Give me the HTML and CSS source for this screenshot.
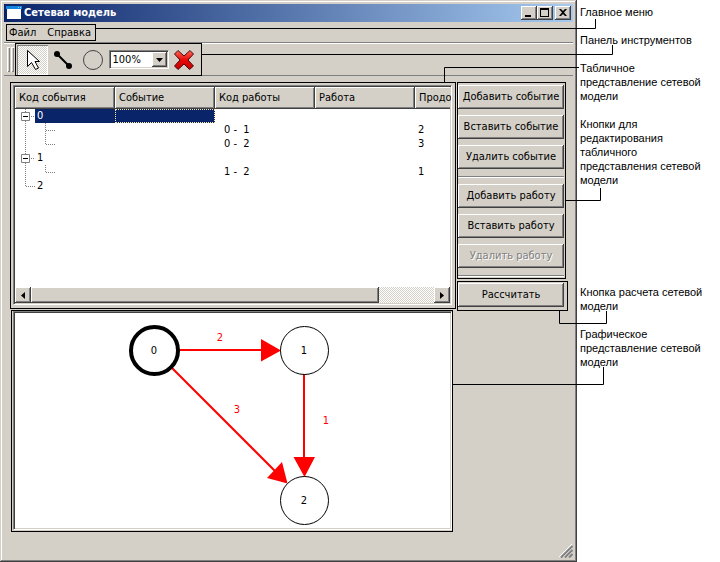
FILE: index.html
```html
<!DOCTYPE html>
<html lang="ru">
<head>
<meta charset="utf-8">
<title>Сетевая модель</title>
<link rel="stylesheet" href="styles.css">
</head>
<body>
<div class="page">
  <section class="window">
    <header class="titlebar">
      <svg class="app-icon" width="16" height="14" viewBox="0 0 16 14" aria-hidden="true"><path fill="#fff" d="M1 0h14v13H1z"/><path fill="#1486e0" d="M0 0h16v3H0z"/><path fill="#8fd0ff" d="M12 1h1v1h-1zM14 1h1v1h-1z"/></svg>
      <h1>Сетевая модель</h1>
      <button class="caption raised" type="button" aria-label="Свернуть"><svg width="12" height="10" viewBox="0 0 12 10"><path d="M2 7h6v2H2z"/></svg></button>
      <button class="caption raised" type="button" aria-label="Развернуть"><svg width="12" height="10" viewBox="0 0 12 10"><path fill-rule="evenodd" d="M1 0h9v9H1zM2 2v6h7V2z"/></svg></button>
      <button class="caption close raised" type="button" aria-label="Закрыть"><svg width="12" height="10" viewBox="0 0 12 10"><path d="M2 1h2l2 2 2-2h2L7 4.500l3 3.500H8L6 6 4 8H2l3-3.500z"/></svg></button>
    </header>
    <nav class="menubar">
      <div class="menu"><button type="button">Файл</button><button type="button">Справка</button></div>
    </nav>
    <div class="toolbar">
      <span class="grip"></span><span class="grip"></span>
      <div class="tools">
        <button class="tool pressed" type="button" aria-label="Выбор"><svg width="28" height="28" viewBox="0 0 28 28"><path fill="#fff" stroke="#000" d="M9.500 4.500v16l4-4 4 7 3-1.500-3.500-6.500h4.500z"/></svg></button>
        <button class="tool" type="button" aria-label="Работа"><svg width="28" height="28" viewBox="0 0 28 28"><path stroke="#000" stroke-width="2" d="M8 8l12 12"/><circle cx="8" cy="8" r="3"/><circle cx="20" cy="20" r="3"/></svg></button>
        <button class="tool" type="button" aria-label="Событие"><svg width="28" height="28" viewBox="0 0 28 28"><circle cx="14" cy="14" r="9.500" fill="none" stroke="#444"/></svg></button>
        <div class="zoom">
          <select aria-label="Масштаб"><option>100%</option></select>
          <span class="drop raised"><svg width="7" height="4" viewBox="0 0 7 4"><path d="M0 0h7L3.500 4z"/></svg></span>
        </div>
        <button class="tool" type="button" aria-label="Удалить"><svg width="24" height="24" viewBox="0 0 24 24"><defs><linearGradient id="red" x2="0" y2="1"><stop stop-color="#ff6a5a"/><stop offset=".5" stop-color="#e80808"/><stop offset="1" stop-color="#c40000"/></linearGradient></defs><path fill="url(#red)" stroke="#4a0808" d="M6 2.500L12 8l6-5.500L21.500 6 16 12l5.500 6-4 3.500L12 16l-6 5.500L2.500 18 8 12 2.500 6z"/></svg></button>
      </div>
    </div>
    <main class="content">
      <div class="views">
        <section class="grid-outline">
          <div class="sunken grid-view">
            <table>
              <thead><tr><th>Код события</th><th>Событие</th><th>Код работы</th><th>Работа</th><th>Продо</th></tr></thead>
              <tbody>
                <tr><td class="tree"><div><svg width="20" height="14" viewBox="0 0 20 14"><path class="dots" d="M10.500 0v14M16 7.500h4"/><path class="box" d="M6.500 3.500h8v8h-8z"/><path class="sign" d="M8 7.500h5"/></svg><span class="label selected">0</span></div></td><td class="focus"></td><td></td><td></td><td></td></tr>
                <tr><td class="tree"><div><svg width="40" height="14" viewBox="0 0 40 14"><path class="dots" d="M10.500 0v14M30.500 0v14M31 7.500h9"/></svg></div></td><td></td><td class="job">0 -  1</td><td></td><td>2</td></tr>
                <tr><td class="tree"><div><svg width="40" height="14" viewBox="0 0 40 14"><path class="dots" d="M10.500 0v14M30.500 0v8M31 7.500h9"/></svg></div></td><td></td><td class="job">0 -  2</td><td></td><td>3</td></tr>
                <tr><td class="tree"><div><svg width="20" height="14" viewBox="0 0 20 14"><path class="dots" d="M10.500 0v14M16 7.500h4"/><path class="box" d="M6.500 3.500h8v8h-8z"/><path class="sign" d="M8 7.500h5"/></svg><span class="label">1</span></div></td><td></td><td></td><td></td><td></td></tr>
                <tr><td class="tree"><div><svg width="40" height="14" viewBox="0 0 40 14"><path class="dots" d="M10.500 0v14M30.500 0v8M31 7.500h9"/></svg></div></td><td></td><td class="job">1 -  2</td><td></td><td>1</td></tr>
                <tr><td class="tree"><div><svg width="20" height="14" viewBox="0 0 20 14"><path class="dots" d="M10.500 0v8M11 7.500h9"/></svg><span class="label">2</span></div></td><td></td><td></td><td></td><td></td></tr>
              </tbody>
            </table>
            <div class="scrollbar">
              <button class="raised" type="button" aria-label="Влево"><svg width="4" height="7" viewBox="0 0 4 7"><path d="M4 0v7L0 3.500z"/></svg></button>
              <span class="thumb raised"></span>
              <button class="raised" type="button" aria-label="Вправо"><svg width="4" height="7" viewBox="0 0 4 7"><path d="M0 0v7l4-3.500z"/></svg></button>
            </div>
          </div>
        </section>
        <section class="graph-outline">
          <div class="sunken graph">
            <svg width="435" height="215" viewBox="15 313 435 215" role="img" aria-label="Сетевой граф">
              <g stroke="#f00" stroke-width="2"><path d="M179 350h84M304 374v85M172 368l104 104"/></g>
              <path fill="#f00" d="M261 339l20 11.500-20 11zM293.500 457h21.500l-10.500 20zM282 462l5.500 21.500L267 478z"/>
              <g fill="none" stroke="#000"><circle cx="154.500" cy="350.500" r="23.500" stroke-width="4"/><circle cx="304.500" cy="350.500" r="24"/><circle cx="304.500" cy="500.500" r="24"/></g>
              <g text-anchor="middle"><text x="154" y="354">0</text><text x="304" y="354">1</text><text x="304" y="504">2</text></g>
              <g text-anchor="middle" fill="#f00"><text x="220" y="341">2</text><text x="237" y="413">3</text><text x="326" y="424">1</text></g>
            </svg>
          </div>
        </section>
      </div>
      <aside class="actions">
        <div class="edit">
          <button class="raised" type="button">Добавить событие</button>
          <button class="raised" type="button">Вставить событие</button>
          <button class="raised" type="button">Удалить событие</button>
          <hr>
          <button class="raised" type="button">Добавить работу</button>
          <button class="raised" type="button">Вставить работу</button>
          <button class="raised" type="button" disabled>Удалить работу</button>
          <hr>
        </div>
        <div class="calc"><button class="raised" type="button">Рассчитать</button></div>
      </aside>
    </main>
    <footer class="status"><svg width="14" height="14" viewBox="0 0 14 14" aria-hidden="true"><path stroke="#fff" d="M0 13L13 0M4 13l9-9M8 13l5-5"/><path stroke="#808080" stroke-width="2" d="M2 13.500L13.500 2M6 13.500l7.500-7.500M10 13.500l3.500-3.500"/></svg></footer>
  </section>
  <aside class="notes">
    <p>Главное меню</p>
    <p>Панель инструментов</p>
    <p>Табличное<br>представление сетевой<br>модели</p>
    <p>Кнопки для<br>редактирования<br>табличного<br>представления сетевой<br>модели</p>
    <p class="lower">Кнопка расчета сетевой<br>модели</p>
    <p>Графическое<br>представление сетевой<br>модели</p>
  </aside>
  <svg class="leaders" width="720" height="562" viewBox="0 0 720 562" aria-hidden="true"><path d="M96 28.500h499.500V19M201 54.500h411.500V45M444.500 82V67.500H579M566 200.500h34.500V188M559.500 311v12.500h47V311M453 384.500h150.500V367"/></svg>
</div>
</body>
</html>
```

FILE: styles.css
```css
* { box-sizing: border-box; }

body {
  margin: 0;
  background: #fff;
  color: #000;
  font: 11px/14px "DejaVu Sans Condensed", "DejaVu Sans", sans-serif;
}

button, select {
  margin: 0;
  padding: 0;
  border: 0;
  border-radius: 0;
  background: #d4d0c8;
  color: #000;
  font: inherit;
}

svg { display: block; flex: none; }

.page {
  position: relative;
  display: grid;
  grid-template-columns: minmax(0, 1fr) 143px;
  min-height: 100vh;
}

.window {
  display: flex;
  flex-direction: column;
  min-width: 0;
  padding: 4px;
  background: #d4d0c8;
  box-shadow: inset -1px -1px #404040, inset 1px 1px #d4d0c8, inset -2px -2px #808080, inset 2px 2px #fff;
}

.raised {
  background: #d4d0c8;
  box-shadow: inset -1px -1px #404040, inset 1px 1px #fff, inset -2px -2px #808080;
}

.sunken {
  padding: 1px;
  border: 1px solid;
  border-color: #808080 #fff #fff #808080;
  box-shadow: inset 1px 1px #404040, inset -1px -1px #d4d0c8;
  background: #fff;
}

.titlebar {
  display: flex;
  align-items: center;
  height: 18px;
  padding: 0 2px;
  background: linear-gradient(90deg, #0a246a, #a6caf0);
  color: #fff;
}

.titlebar h1 {
  flex: 1;
  margin: 0 0 0 2px;
  font-size: 11px;
  font-weight: bold;
}

.caption {
  display: grid;
  place-items: center;
  width: 16px;
  height: 14px;
}

.close { margin-left: 2px; }

.menubar {
  height: 21px;
  padding: 2px 2px 0;
  border-bottom: 1px solid #808080;
}

.menu {
  display: flex;
  gap: 11px;
  width: 90px;
  height: 17px;
  padding: 0 2px;
  border: 1px solid #000;
}

.toolbar {
  display: flex;
  gap: 1px;
  height: 33px;
  padding-left: 3px;
  border-top: 1px solid #fff;
  border-bottom: 1px solid #808080;
}

.grip {
  width: 3px;
  margin: 3px 0;
  box-shadow: inset 1px 1px #fff, inset -1px -1px #808080;
}

.tools {
  display: flex;
  align-items: center;
  width: 187px;
  height: 33px;
  margin-top: -1px;
  padding: 0 2px 0 1px;
  border: 1px solid #000;
}

.tool {
  display: grid;
  place-items: center;
  width: 31px;
  height: 30px;
}

.pressed {
  background: repeating-conic-gradient(#fff 0 25%, #d4d0c8 0 50%) 0 0 / 2px 2px;
  box-shadow: inset 1px 1px #808080, inset -1px -1px #fff;
}

.zoom {
  display: grid;
  grid-template-columns: 1fr 16px;
  flex: none;
  width: 60px;
  height: 19px;
  border: 1px solid;
  border-color: #808080 #fff #fff #808080;
}

.zoom select {
  grid-area: 1 / 1 / 2 / 3;
  padding: 0 3px;
  appearance: none;
  background: #fff;
  box-shadow: inset 1px 1px #404040, inset -1px -1px #d4d0c8;
}

.drop {
  display: grid;
  grid-area: 1 / 2;
  place-items: center;
  margin: 1px 1px 1px 0;
  pointer-events: none;
}

.content {
  display: grid;
  grid-template-columns: minmax(0, 1fr) auto;
  align-items: start;
  gap: 1px;
  padding: 6px 5px 0 6px;
}

.views {
  display: grid;
  grid-template-columns: minmax(0, 1fr);
  gap: 1px;
}

.grid-outline {
  height: 227px;
  padding: 2px 3px 3px 2px;
  border: 1px solid #000;
}

.grid-view {
  display: flex;
  flex-direction: column;
  justify-content: space-between;
  height: 100%;
  overflow: hidden;
}

table {
  width: 100%;
  border-collapse: collapse;
  table-layout: fixed;
}

th {
  width: 100px;
  height: 22px;
  padding: 0 0 0 4px;
  background: #d4d0c8;
  box-shadow: inset -1px -1px #404040, inset 1px 1px #fff, inset -2px -2px #808080;
  font-weight: normal;
  text-align: left;
}

th:last-child {
  width: auto;
  box-shadow: inset 0 -1px #404040, inset 1px 1px #fff, inset 0 -2px #808080;
}

td { height: 14px; padding: 0 3px; }

.tree { padding: 0; }
.tree div { display: flex; }
.label { flex: 1; padding-left: 2px; }
.selected, .focus { background: #0a246a; color: #fff; }
.focus { outline: 1px dotted #ffe9a0; outline-offset: -1px; }
.job { padding-left: 9px; white-space: pre; }
.dots { fill: none; stroke: #808080; stroke-dasharray: 1 1; }
.box { fill: #fff; stroke: #808080; }
.sign { stroke: #000; }

.scrollbar {
  display: flex;
  height: 16px;
  background: repeating-conic-gradient(#fff 0 25%, #d4d0c8 0 50%) 0 0 / 2px 2px;
}

.scrollbar button {
  display: grid;
  flex: none;
  place-items: center;
  width: 16px;
}

.thumb { width: 80%; margin-right: auto; }

.graph-outline {
  margin: 0 3px 0 1px;
  padding: 0 0 1px 1px;
  border: 1px solid #000;
}

.graph { overflow: hidden; }

.actions { display: grid; justify-items: start; gap: 2px; }

.edit {
  display: grid;
  gap: 6px;
  width: 109px;
  padding: 2px 2px 1px 0;
  border: 1px solid #000;
}

.edit button, .calc button { width: 106px; height: 24px; }
.edit button:disabled { color: #808080; text-shadow: 1px 1px #fff; }

.edit hr {
  width: 100%;
  height: 2px;
  margin: 1px 0 0;
  border: solid;
  border-width: 1px 0;
  border-color: #808080 transparent #fff;
}

.calc {
  width: 111px;
  padding: 1px 0 3px;
  border: 1px solid #000;
}

.status {
  display: flex;
  justify-content: flex-end;
  margin-top: auto;
}

.notes {
  padding: 5px 0 0 3px;
  font-family: "Liberation Sans", Arial, sans-serif;
  white-space: nowrap;
}

.notes p { margin: 0 0 14px; }
.notes .lower { margin-top: 98px; }

.leaders {
  position: absolute;
  top: 0;
  left: 0;
  fill: none;
  stroke: #000;
  pointer-events: none;
}
```
